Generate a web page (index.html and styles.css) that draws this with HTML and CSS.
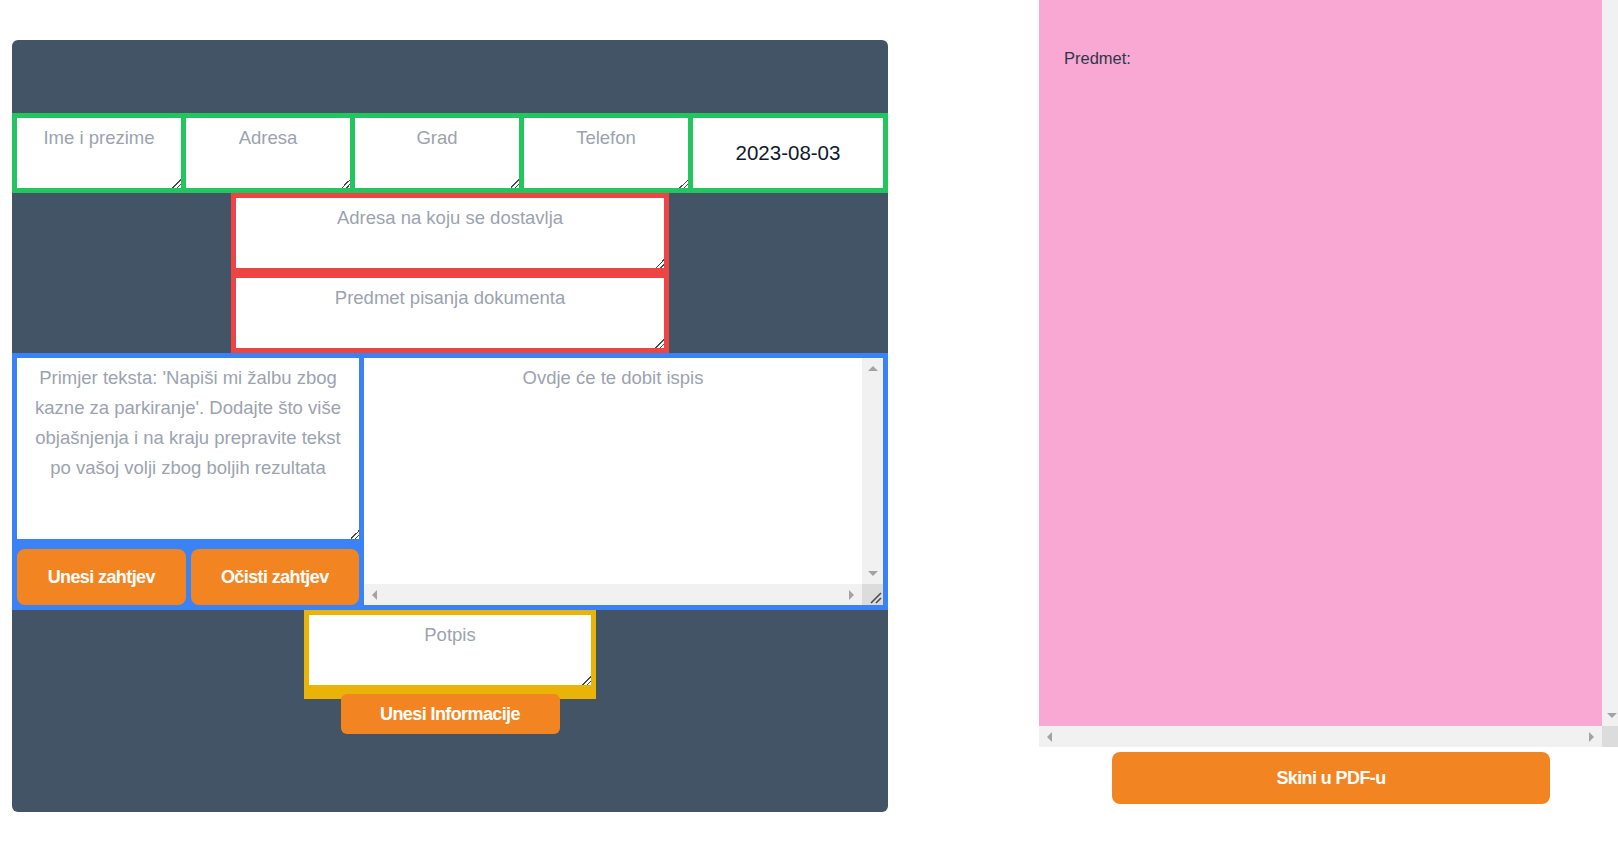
FILE: index.html
```html
<!DOCTYPE html>
<html lang="hr">
<head>
<meta charset="utf-8">
<title>Generator dokumenata</title>
<link rel="stylesheet" href="styles.css">
</head>
<body>
<div class="page">
  <div class="panel">
    <div class="row-green">
      <textarea class="field small" placeholder="Ime i prezime"></textarea>
      <textarea class="field small" placeholder="Adresa"></textarea>
      <textarea class="field small" placeholder="Grad"></textarea>
      <textarea class="field small" placeholder="Telefon"></textarea>
      <input class="date" type="text" value="2023-08-03">
    </div>
    <div class="box-red">
      <textarea class="field wide" placeholder="Adresa na koju se dostavlja"></textarea>
      <textarea class="field wide" placeholder="Predmet pisanja dokumenta"></textarea>
    </div>
    <div class="box-blue">
      <div class="left-col">
        <textarea class="field prompt" placeholder="Primjer teksta: 'Napiši mi žalbu zbog kazne za parkiranje'. Dodajte što više objašnjenja i na kraju prepravite tekst po vašoj volji zbog boljih rezultata"></textarea>
        <div class="btn-row">
          <button class="btn btn-half">Unesi zahtjev</button>
          <button class="btn btn-half">Očisti zahtjev</button>
        </div>
      </div>
      <div class="scrollbox out-box">
        <textarea class="field output" placeholder="Ovdje će te dobit ispis"></textarea>
        <div class="vbar">
          <svg class="arr" width="10" height="5" viewBox="0 0 10 5"><polygon points="0,5 10,5 5,0" fill="#a3a3a3"/></svg>
          <svg class="arr" width="10" height="5" viewBox="0 0 10 5"><polygon points="0,0 10,0 5,5" fill="#a3a3a3"/></svg>
        </div>
        <div class="hbar">
          <svg class="arr" width="5" height="10" viewBox="0 0 5 10"><polygon points="5,0 5,10 0,5" fill="#a3a3a3"/></svg>
          <svg class="arr" width="5" height="10" viewBox="0 0 5 10"><polygon points="0,0 0,10 5,5" fill="#a3a3a3"/></svg>
        </div>
        <div class="corner">
          <svg width="21" height="21" viewBox="0 0 21 21">
            <line x1="9" y1="19" x2="19" y2="9" stroke="#4b4b4b" stroke-width="1.6"/>
            <line x1="14" y1="19" x2="19" y2="14" stroke="#4b4b4b" stroke-width="1.6"/>
          </svg>
        </div>
      </div>
    </div>
    <div class="box-yellow">
      <textarea class="field sign" placeholder="Potpis"></textarea>
    </div>
    <button class="btn btn-info">Unesi Informacije</button>
  </div>
  <div class="right">
    <div class="scrollbox doc-box">
      <div class="doc">
        <p class="doc-line">Predmet:</p>
      </div>
      <div class="vbar vbar-doc">
        <svg class="arr" width="10" height="5" viewBox="0 0 10 5"><polygon points="0,0 10,0 5,5" fill="#a3a3a3"/></svg>
      </div>
      <div class="hbar">
        <svg class="arr" width="5" height="10" viewBox="0 0 5 10"><polygon points="5,0 5,10 0,5" fill="#a3a3a3"/></svg>
        <svg class="arr" width="5" height="10" viewBox="0 0 5 10"><polygon points="0,0 0,10 5,5" fill="#a3a3a3"/></svg>
      </div>
      <div class="corner"></div>
    </div>
    <button class="btn btn-pdf">Skini u PDF-u</button>
  </div>
</div>
</body>
</html>
```

FILE: styles.css
```css
* { box-sizing: border-box; }

html, body {
  margin: 0;
  padding: 0;
  background: #ffffff;
  overflow: hidden;
  font-family: "Liberation Sans", Arial, sans-serif;
}

.page {
  display: flex;
  align-items: flex-start;
  width: 1618px;
}

.panel {
  flex: none;
  width: 876px;
  height: 772px;
  margin: 40px 0 0 12px;
  padding-top: 73px;
  background: #425466;
  border-radius: 6px;
  display: flex;
  flex-direction: column;
  align-items: center;
}

.field {
  display: block;
  border: none;
  outline: none;
  margin: 0;
  padding: 5px 6px;
  background: #ffffff;
  font-family: "Liberation Sans", Arial, sans-serif;
  font-size: 18.5px;
  line-height: 30px;
  text-align: center;
  color: #1f2937;
}

.field::placeholder { color: #9ca3af; opacity: 1; }

.field::-webkit-resizer {
  background: linear-gradient(135deg,
    transparent 0 70%,
    #4b4b4b 70% 76%,
    transparent 76% 84%,
    #4b4b4b 84% 90%,
    transparent 90%);
}

.row-green {
  width: 876px;
  display: flex;
  gap: 5px;
  padding: 5px;
  background: #22c55e;
}

.small { width: 164px; height: 70px; }

.date {
  width: 190px;
  height: 70px;
  border: none;
  outline: none;
  padding: 0;
  margin: 0;
  background: #ffffff;
  text-align: center;
  font-family: "Liberation Sans", Arial, sans-serif;
  font-size: 20.5px;
  color: #0f1a2b;
}

.box-red {
  width: 438px;
  display: flex;
  flex-direction: column;
  gap: 10px;
  padding: 5px;
  background: #ef4444;
}

.wide { width: 428px; height: 70px; }

.box-blue {
  width: 876px;
  display: flex;
  gap: 5px;
  padding: 5px;
  background: #3b82f6;
}

.left-col {
  flex: none;
  width: 342px;
  display: flex;
  flex-direction: column;
  gap: 10px;
}

.prompt { width: 342px; height: 181px; }

.btn-row {
  display: flex;
  gap: 5px;
  height: 56px;
}

.btn {
  border: none;
  margin: 0;
  padding: 0;
  background: #f28522;
  color: #ffffff;
  font-family: "Liberation Sans", Arial, sans-serif;
  font-weight: bold;
  font-size: 18px;
  letter-spacing: -0.6px;
  cursor: pointer;
}

.btn-half {
  flex: 1;
  border-radius: 8px;
}

/* scroll containers with drawn scrollbars */
.scrollbox {
  flex: none;
  display: grid;
  overflow: hidden;
}

.scrollbox > :nth-child(1) { grid-column: 1; grid-row: 1; }
.scrollbox > :nth-child(2) { grid-column: 2; grid-row: 1; }
.scrollbox > :nth-child(3) { grid-column: 1; grid-row: 2; }
.scrollbox > :nth-child(4) { grid-column: 2; grid-row: 2; }

.out-box {
  width: 519px;
  height: 247px;
  grid-template-columns: 498px 21px;
  grid-template-rows: 226px 21px;
}

.output {
  width: 498px;
  height: 226px;
  resize: none;
}

.arr { display: block; flex: none; }

.vbar {
  background: #f1f1f1;
  display: flex;
  flex-direction: column;
  justify-content: space-between;
  align-items: center;
  padding: 8px 0;
}

.hbar {
  background: #f1f1f1;
  display: flex;
  justify-content: space-between;
  align-items: center;
  padding: 0 8px;
}

.corner {
  background: #dcdcdc;
  display: flex;
}

.box-yellow {
  width: 292px;
  padding: 5px 5px 14px;
  background: #eab308;
}

.sign { width: 282px; height: 70px; }

.btn-info {
  width: 219px;
  height: 40px;
  margin-top: -5px;
  border-radius: 6px;
}

.right {
  flex: none;
  width: 579px;
  margin-left: 151px;
  display: flex;
  flex-direction: column;
}

.doc-box {
  width: 579px;
  height: 747px;
  grid-template-columns: 563px 16px;
  grid-template-rows: 726px 21px;
}

.doc {
  background: #f9a8d4;
  padding: 49px 25px;
}

.vbar-doc {
  justify-content: flex-end;
  align-items: flex-start;
  padding: 0 0 8px 5px;
}

.doc-line {
  margin: 0;
  font-size: 16.5px;
  color: #2d3748;
}

.btn-pdf {
  width: 438px;
  height: 52px;
  margin: 5px 0 0 73px;
  border-radius: 8px;
}
```
